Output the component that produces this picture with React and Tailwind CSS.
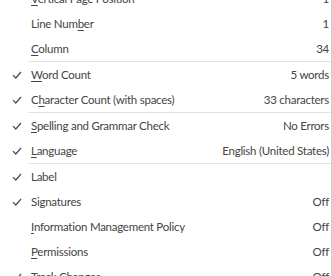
import React from "react";

const Check = () => (
  <svg width="10" height="10" viewBox="0 0 10 10" className="block">
    <polyline points="1,5.2 3.8,8 9,2" fill="none" stroke="#4a4a4a" strokeWidth="1.2" />
  </svg>
);

const rows = [
  { k: "v", label: [<u key="u">V</u>, "ertical Page Position"], value: "1", checked: false },
  { k: "ln", label: ["Line Num", <u key="u">b</u>, "er"], value: "1", checked: false },
  { k: "col", label: [<u key="u">C</u>, "olumn"], value: "34", checked: false, sep: true },
  { k: "wc", label: [<u key="u">W</u>, "ord Count"], value: "5 words", checked: true },
  { k: "cc", label: ["C", <u key="u">h</u>, "aracter Count (with spaces)"], value: "33 characters", checked: true, sep: true },
  { k: "sp", label: [<u key="u">S</u>, "pelling and Grammar Check"], value: "No Errors", checked: true },
  { k: "lang", label: [<u key="u">L</u>, "anguage"], value: "English (United States)", checked: true, sep: true },
  { k: "lab", label: ["Label"], value: "", checked: true },
  { k: "sig", label: ["Signatures"], value: "Off", checked: true },
  { k: "imp", label: [<u key="u">I</u>, "nformation Management Policy"], value: "Off", checked: false },
  { k: "perm", label: [<u key="u">P</u>, "ermissions"], value: "Off", checked: false },
  { k: "tc", label: [<u key="u">T</u>, "rack Changes"], value: "Off", checked: true },
];

export default function App() {
  return (
    <div className="w-[332px] h-[276px] overflow-hidden bg-white border-r border-[#cfcfcf]">
      <div
        className="-mt-[14px] flex flex-col text-[11.5px] tracking-[-0.25px] text-[#444444]"
        style={{ fontFamily: 'Lato, "Open Sans", sans-serif' }}
      >
        {rows.map((r) => (
          <React.Fragment key={r.k}>
            <div className="h-[25px] flex items-center">
              <div className="w-[31px] flex justify-start pl-[12px]">
                {r.checked ? <Check /> : null}
              </div>
              <div className="flex-1 whitespace-nowrap underline-offset-2">{r.label}</div>
              <div className="pr-[2px] whitespace-nowrap">{r.value}</div>
            </div>
            {r.sep ? <div className="ml-[28px] h-px bg-[#e3e3e3]" /> : null}
          </React.Fragment>
        ))}
      </div>
    </div>
  );
}
